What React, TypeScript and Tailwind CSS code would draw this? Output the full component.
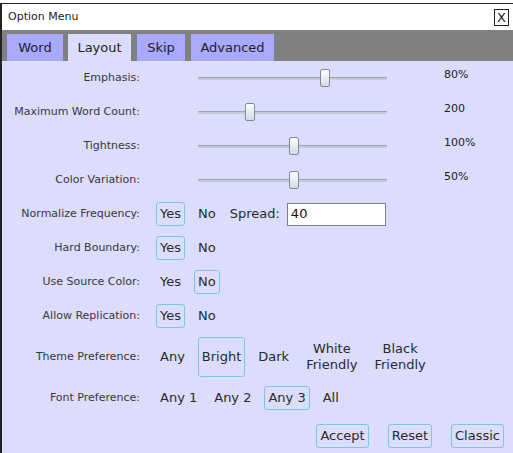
import React from 'react';

const font = "font-['DejaVu_Sans',Verdana,sans-serif]";

const sliders = [
  { label: 'Emphasis:', value: '80%', thumb: 'left-[122px]' },
  { label: 'Maximum Word Count:', value: '200', thumb: 'left-[47px]' },
  { label: 'Tightness:', value: '100%', thumb: 'left-[91px]' },
  { label: 'Color Variation:', value: '50%', thumb: 'left-[91px]' },
];

const Choice: React.FC<{ on?: boolean; children: React.ReactNode }> = ({ on, children }) => (
  <div
    className={`flex items-center justify-center px-[3px] py-[3px] border rounded-[3px] text-[13px] leading-[16px] text-[#2a2a2a] text-center ${
      on ? 'border-[#7cc8d4]' : 'border-transparent'
    }`}
  >
    {children}
  </div>
);

const Label: React.FC<{ children: React.ReactNode }> = ({ children }) => (
  <div className="w-[138px] shrink-0 text-right text-[11px] text-[#383838]">{children}</div>
);

const Slider: React.FC<{ thumb: string }> = ({ thumb }) => (
  <div className="relative w-[189px] h-[18px] flex items-center">
    <div className="w-full h-[3px] border-t border-[#9aa3b3] bg-[#c4cad6]" />
    <div className={`absolute top-0 ${thumb} w-[10px] h-[18px] rounded-[2px] border border-[#7f8aa0] bg-gradient-to-b from-white to-[#d6d9e2]`} />
  </div>
);

const YesNo: React.FC<{ label: string; yes: boolean; extra?: React.ReactNode }> = ({ label, yes, extra }) => (
  <div className="flex items-center h-[34px]">
    <Label>{label}</Label>
    <div className="flex items-center gap-[9px] ml-[16px]">
      <Choice on={yes}>Yes</Choice>
      <Choice on={!yes}>No</Choice>
      {extra}
    </div>
  </div>
);

export default function App() {
  return (
    <div className={`w-[513px] h-[453px] bg-white overflow-hidden ${font}`}>
      <div className="h-[3px]" />
      <div className="border-t border-l-2 border-[#222] h-[450px] flex flex-col">
        {/* title bar */}
        <div className="h-[26px] flex items-center justify-between pl-[6px] pr-[4px] bg-white">
          <span className="text-[11px] text-[#222]">Option Menu</span>
          <div className="w-[15px] h-[17px] border border-[#222] flex items-center justify-center text-[13px] leading-none text-[#222]">
            X
          </div>
        </div>

        {/* tabs */}
        <div className="h-[31px] bg-[#808080] flex items-end pl-[5px]">
          <div className="w-[56px] h-[27px] bg-[#a9a9ff] flex items-center justify-center text-[13px] text-[#222]">Word</div>
          <div className="ml-[5px] w-[63px] h-[27px] bg-[#dcdcfd] flex items-center justify-center text-[13px] text-[#222]">Layout</div>
          <div className="ml-[6px] w-[48px] h-[27px] bg-[#a9a9ff] flex items-center justify-center text-[13px] text-[#222]">Skip</div>
          <div className="ml-[6px] w-[83px] h-[27px] bg-[#a9a9ff] flex items-center justify-center text-[13px] text-[#222]">Advanced</div>
        </div>

        {/* content */}
        <div className="flex-1 bg-[#dcdcfd] flex flex-col">
          {sliders.map((s) => (
            <div key={s.label} className="flex items-center h-[34px]">
              <Label>{s.label}</Label>
              <div className="ml-[58px]">
                <Slider thumb={s.thumb} />
              </div>
              <div className="ml-[57px] -mt-[6px] text-[11px] text-[#222]">{s.value}</div>
            </div>
          ))}

          <YesNo
            label="Normalize Frequency:"
            yes
            extra={
              <div className="flex items-center ml-[1px]">
                <span className="text-[13px] text-[#2a2a2a]">Spread:</span>
                <div className="ml-[7px] w-[99px] h-[23px] bg-white border border-[#7a8090] flex items-center px-[3px] text-[13px] text-[#111]">
                  40
                </div>
              </div>
            }
          />
          <YesNo label="Hard Boundary:" yes />
          <YesNo label="Use Source Color:" yes={false} />
          <YesNo label="Allow Replication:" yes />

          <div className="flex items-center h-[48px]">
            <Label>Theme Preference:</Label>
            <div className="flex items-stretch gap-[9px] ml-[16px] h-[40px]">
              <Choice>Any</Choice>
              <Choice on>Bright</Choice>
              <Choice>Dark</Choice>
              <Choice>
                White
                <br />
                Friendly
              </Choice>
              <Choice>
                Black
                <br />
                Friendly
              </Choice>
            </div>
          </div>

          <div className="flex items-center h-[34px]">
            <Label>Font Preference:</Label>
            <div className="flex items-center gap-[9px] ml-[16px]">
              <Choice>Any 1</Choice>
              <Choice>Any 2</Choice>
              <Choice on>Any 3</Choice>
              <Choice>All</Choice>
            </div>
          </div>

          <div className="flex justify-end gap-[19px] mt-[9px] pr-[9px]">
            <Choice on>Accept</Choice>
            <Choice on>Reset</Choice>
            <Choice on>Classic</Choice>
          </div>
        </div>
      </div>
    </div>
  );
}
